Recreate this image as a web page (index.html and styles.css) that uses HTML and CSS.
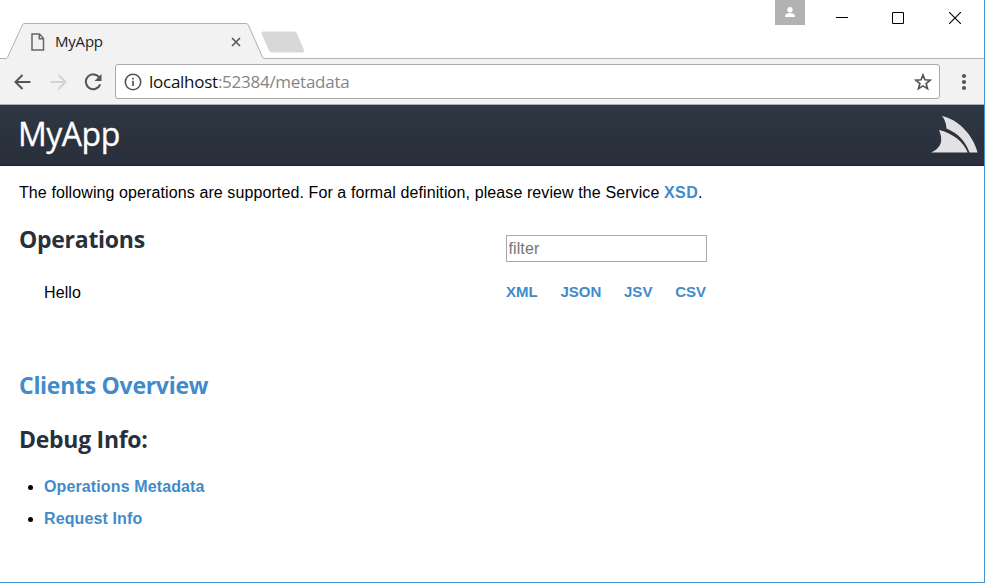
FILE: index.html
```html
<!DOCTYPE html>
<html lang="en">
<head>
<meta charset="utf-8">
<title>MyApp</title>
<link rel="stylesheet" href="styles.css">
</head>
<body>
<div class="window">
  <div class="titlebar">
    <div class="tab">
      <svg class="tab-shape" width="268" height="36" viewBox="0 0 268 36"><path d="M0 35.5H6L7.5 34.5L22.5 1.8Q23 .5 24.500 .5H246Q247.700 .5 248.300 2L262.500 34Q263.200 35.500 264.500 35.500H268V36H0Z" fill="#f2f2f2"/><path d="M0 35.500H6.500L7.500 34.500L22.500 1.800Q23 .5 24.500 .5H246Q247.700 .5 248.300 2L262.500 34Q263.200 35.500 264.500 35.500H268" fill="none" stroke="#b0b0b0"/></svg>
      <div class="tab-content">
        <svg width="14" height="18" viewBox="0 0 14 18"><path d="M1 1H8.500L12.500 5.500V17H1ZM8.300 1V5.700H12.500" fill="none" stroke="#666" stroke-width="1.500"/></svg>
        <span class="tab-title">MyApp</span>
        <svg width="10" height="10" viewBox="0 0 10 10"><path d="M1 1L9 9M9 1L1 9" stroke="#555" stroke-width="1.600"/></svg>
      </div>
    </div>
    <svg class="new-tab" width="44" height="22" viewBox="0 0 44 22"><path d="M2 .5H33Q35 .5 36 2.500L43 19Q43.700 21.500 41.500 21.500H11Q9 21.500 8 19.500L.7 3Q0 .7 2 .5Z" fill="#d8d8d8"/></svg>
    <div class="spacer"></div>
    <div class="profile"><svg width="10" height="10" viewBox="0 0 10 10"><circle cx="5" cy="2.700" r="2.700" fill="#fff"/><path d="M0 10V8.500Q1 6 5 6T10 8.500V10Z" fill="#fff"/></svg></div>
    <div class="controls">
      <svg width="12" height="12" viewBox="0 0 12 12"><path d="M0 5.500H12" stroke="#000"/></svg>
      <svg width="12" height="12" viewBox="0 0 12 12"><path d="M.5 .5H11.500V11.500H.5Z" stroke="#000" fill="none"/></svg>
      <svg width="12" height="12" viewBox="0 0 12 12"><path d="M0 0L12 12M12 0L0 12" stroke="#000" stroke-width="1.100"/></svg>
    </div>
  </div>
  <div class="toolbar">
    <svg class="back" width="17" height="16" viewBox="0 0 17 16"><path d="M8.500 1L1.500 8L8.500 15M1.500 8H16.500" fill="none" stroke="#555" stroke-width="2"/></svg>
    <svg class="forward" width="17" height="16" viewBox="0 0 17 16"><path d="M8.500 1L15.500 8L8.500 15M15.500 8H.5" fill="none" stroke="#d2d2d2" stroke-width="2"/></svg>
    <svg class="reload" width="18" height="18" viewBox="0 0 18 18"><path d="M15.300 4.500A7.400 7.400 0 1 0 16.200 11.300" fill="none" stroke="#555" stroke-width="2"/><path d="M17.500 1V8H10.500Z" fill="#555"/></svg>
    <div class="address">
      <svg width="18" height="18" viewBox="0 0 18 18"><circle cx="9" cy="9" r="7.700" fill="none" stroke="#555" stroke-width="1.600"/><path d="M9 7.700V13M9 4.700V6.400" stroke="#555" stroke-width="1.700"/></svg>
      <span class="url"><span class="host">localhost</span>:52384/metadata</span>
      <svg class="star" width="18" height="18" viewBox="0 0 18 18"><path d="M9 2L10.900 6.800L16.200 7.200L12.100 10.500L13.500 15.700L9 12.900L4.500 15.700L5.900 10.500L1.800 7.200L7.100 6.800Z" fill="none" stroke="#555" stroke-width="1.700"/></svg>
    </div>
    <svg class="menu" width="6" height="18" viewBox="0 0 6 18"><g fill="#555"><circle cx="3" cy="3" r="2.100"/><circle cx="3" cy="9" r="2.100"/><circle cx="3" cy="15" r="2.100"/></g></svg>
  </div>
  <header class="header">
    <h1>MyApp</h1>
    <svg width="50" height="40" viewBox="0 0 50 40"><path d="M13 2C28 5 44 20 48.500 38.500H40.500C37 28 29 19 17.500 14.500Q17 7 13 2Z" fill="#e2e0e2"/><path d="M10 16C23 19 34 27 38.700 38.500H2Q17 32 10 16Z" fill="#e2e0e2"/></svg>
  </header>
  <main>
    <p class="intro">The following operations are supported. For a formal definition, please review the Service <a class="xsd">XSD</a>.</p>
    <div class="operations-head"><h2 class="operations-title">Operations</h2><input type="text" class="filter" placeholder="filter"></div>
    <div class="operation"><span class="operation-name">Hello</span><div class="formats"><a>XML</a><a>JSON</a><a>JSV</a><a>CSV</a></div></div>
    <h2 class="clients"><a>Clients Overview</a></h2>
    <h2 class="debug">Debug Info:</h2>
    <ul><li><a class="metadata">Operations Metadata</a></li><li><a>Request Info</a></li></ul>
  </main>
</div>
</body>
</html>
```
FILE: styles.css
```css
* { box-sizing: border-box; }
body { margin: 0; background: #fff; font: 16px/24px "Liberation Sans", Arial, sans-serif; color: #000; }
svg { display: block; flex: none; }
.window { width: 985px; height: 583px; border-right: 1px solid #4a94cc; border-bottom: 1px solid #4a94cc; overflow: hidden; }
.titlebar { display: flex; height: 59px; background: linear-gradient(#b0b0b0, #b0b0b0) bottom / 100% 1px no-repeat; }
.tab { display: grid; width: 268px; height: 36px; margin-top: 23px; }
.tab-shape, .tab-content { grid-area: 1 / 1; }
.tab-content { display: flex; align-items: center; height: 36px; padding: 2px 27px 0 31px; }
.tab-title { flex: 1; margin-top: -2px; padding-left: 10px; font: 15px/20px "Open Sans", sans-serif; letter-spacing: -.2px; color: #222; }
.new-tab { margin: 31px 0 0 -7.5px; }
.spacer { flex: 1; }
.profile { display: flex; justify-content: center; padding-top: 7px; width: 30px; height: 25px; background: #b2b2b2; }
.controls { display: flex; gap: 44px; padding: 12px 23px 0 31px; }
.controls svg:last-child { margin-left: 1px; }
.toolbar { display: flex; align-items: center; height: 46px; background: #f2f2f2; border-bottom: 1px solid #b0b0b0; padding: 0 17px 0 14px; }
.forward { margin-left: 19px; }
.reload { margin-left: 17px; }
.address { display: flex; align-items: center; width: 825px; height: 35px; margin-left: 13px; padding: 0 7px 0 8px; background: #fff; border: 1px solid #a9a9a9; border-radius: 3px; }
.url { margin-left: 7px; font: 17px/24px "Open Sans", sans-serif; letter-spacing: -.26px; color: #858585; white-space: nowrap; }
.host { color: #111; }
.star { margin-left: auto; }
.menu { margin-left: auto; }
.header { display: flex; justify-content: space-between; height: 61px; padding: 0 5px 0 18px; background: linear-gradient(#2d3842, #292e3a); border-bottom: 1px solid #1c2028; }
.header svg { margin-top: 9px; }
h1 { margin: 0; font: 400 32px/58px "Open Sans", sans-serif; color: #fff; letter-spacing: -.5px; -webkit-text-stroke: .3px #fff; }
main { padding: 15px 19px 0; }
a { color: #428bca; font-weight: 700; }
.intro { margin: 0; white-space: nowrap; letter-spacing: .1px; }
.xsd { letter-spacing: .4px; }
h2 { margin: 0; font: 700 23px/32px "Open Sans", sans-serif; color: #27303b; letter-spacing: -.28px; }
.operations-head { display: flex; height: 57px; margin-top: 18px; }
.operations-title { width: 487px; }
.filter { width: 201px; height: 27px; margin-top: 12px; padding: 1px 1px 1px 1.5px; border: 1px solid #a9a9a9; border-radius: 0; font: 16px "Liberation Sans", Arial, sans-serif; letter-spacing: .1px; }
.filter::placeholder { color: #757575; opacity: 1; }
.operation { display: flex; padding-left: 25px; height: 24px; letter-spacing: .1px; }
.operation-name { width: 462px; line-height: 26px; }
.formats { display: flex; justify-content: space-between; width: 200px; font-size: 15px; line-height: 23px; letter-spacing: 0; }
.clients { margin-top: 65px; }
.debug { margin-top: 22px; }
ul { margin: 16px 0 0; padding-left: 25px; line-height: 32px; letter-spacing: .12px; }
```
